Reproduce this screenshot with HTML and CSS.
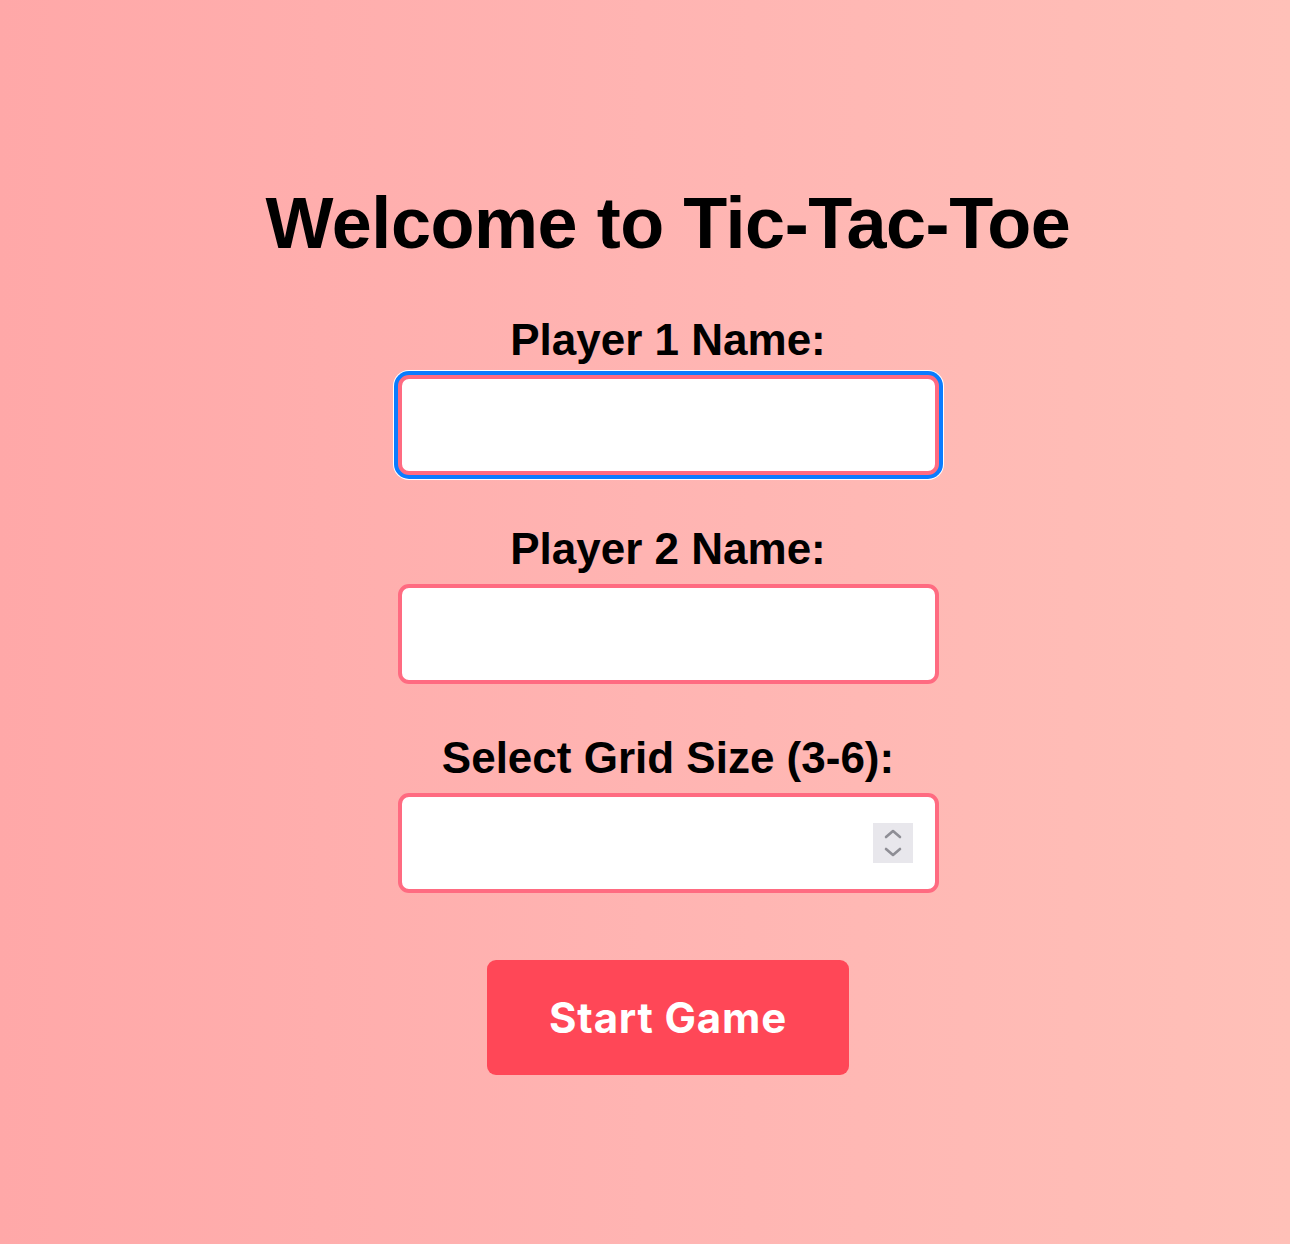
FILE: index.html
```html
<!DOCTYPE html>
<html lang="en">
<head>
<meta charset="utf-8">
<title>Tic-Tac-Toe</title>
<link rel="stylesheet" href="styles.css">
</head>
<body>
<main class="setup">
  <h1 class="title">Welcome to Tic-Tac-Toe</h1>
  <label class="field-label" for="player1">Player 1 Name:</label>
  <input class="field-input is-focused" id="player1" type="text">
  <label class="field-label" for="player2">Player 2 Name:</label>
  <input class="field-input" id="player2" type="text">
  <label class="field-label" for="gridSize">Select Grid Size (3-6):</label>
  <div class="number-wrap">
    <input class="field-input number-input" id="gridSize" type="number" min="3" max="6">
    <span class="spinner" aria-hidden="true">
      <svg width="40" height="40" viewBox="0 0 40 40">
        <path d="M13 14 L20 8 L27 14" fill="none" stroke="#8e8e95" stroke-width="2.6" stroke-linecap="round" stroke-linejoin="round"/>
        <path d="M13 26 L20 32 L27 26" fill="none" stroke="#8e8e95" stroke-width="2.6" stroke-linecap="round" stroke-linejoin="round"/>
      </svg>
    </span>
  </div>
  <button class="start-btn" type="button">Start Game</button>
</main>
</body>
</html>
```
FILE: styles.css
```css
html, body {
  margin: 0;
  padding: 0;
}

body {
  min-height: 1244px;
  background: linear-gradient(to right, #ffa8a8 0%, #ffb4b2 50%, #ffc0b8 100%);
  font-family: "Liberation Sans", Arial, sans-serif;
  color: #000;
}

.setup {
  display: flex;
  flex-direction: column;
  align-items: center;
  padding: 182px 0 0 46px;
}

.title {
  margin: 0 0 51px;
  font-size: 72px;
  line-height: 82px;
  font-weight: 700;
  letter-spacing: -0.45px;
  text-align: center;
}

.field-label {
  display: block;
  margin: 0 0 10px;
  font-size: 44px;
  line-height: 50px;
  font-weight: 700;
  text-align: center;
}

.field-input {
  box-sizing: border-box;
  display: block;
  width: 541px;
  height: 100px;
  margin: 0 0 49px;
  padding: 0 20px;
  border: 4px solid #ff6b81;
  border-radius: 11px;
  background: #fff;
  font-family: "Liberation Sans", Arial, sans-serif;
  font-size: 32px;
  outline: none;
}

.is-focused {
  box-shadow: 0 0 0 4px #0a7cff, 0 0 0 5px #ffffff;
}

.number-wrap {
  position: relative;
  width: 541px;
  margin: 0 0 67px;
}

.number-wrap .field-input {
  margin: 0;
}

.number-input {
  -moz-appearance: textfield;
  appearance: textfield;
}

.number-input::-webkit-inner-spin-button,
.number-input::-webkit-outer-spin-button {
  -webkit-appearance: none;
  margin: 0;
}

.spinner {
  position: absolute;
  top: 30px;
  right: 26px;
  width: 40px;
  height: 40px;
  background: #e8e7ec;
  display: flex;
}

.start-btn {
  box-sizing: border-box;
  width: 362px;
  height: 115px;
  padding: 0;
  border: none;
  border-radius: 9px;
  background: #ff4757;
  color: #fff;
  font-family: Inter, "Noto Sans", sans-serif;
  font-size: 42px;
  font-weight: 700;
  letter-spacing: 0.8px;
  cursor: pointer;
}
```
